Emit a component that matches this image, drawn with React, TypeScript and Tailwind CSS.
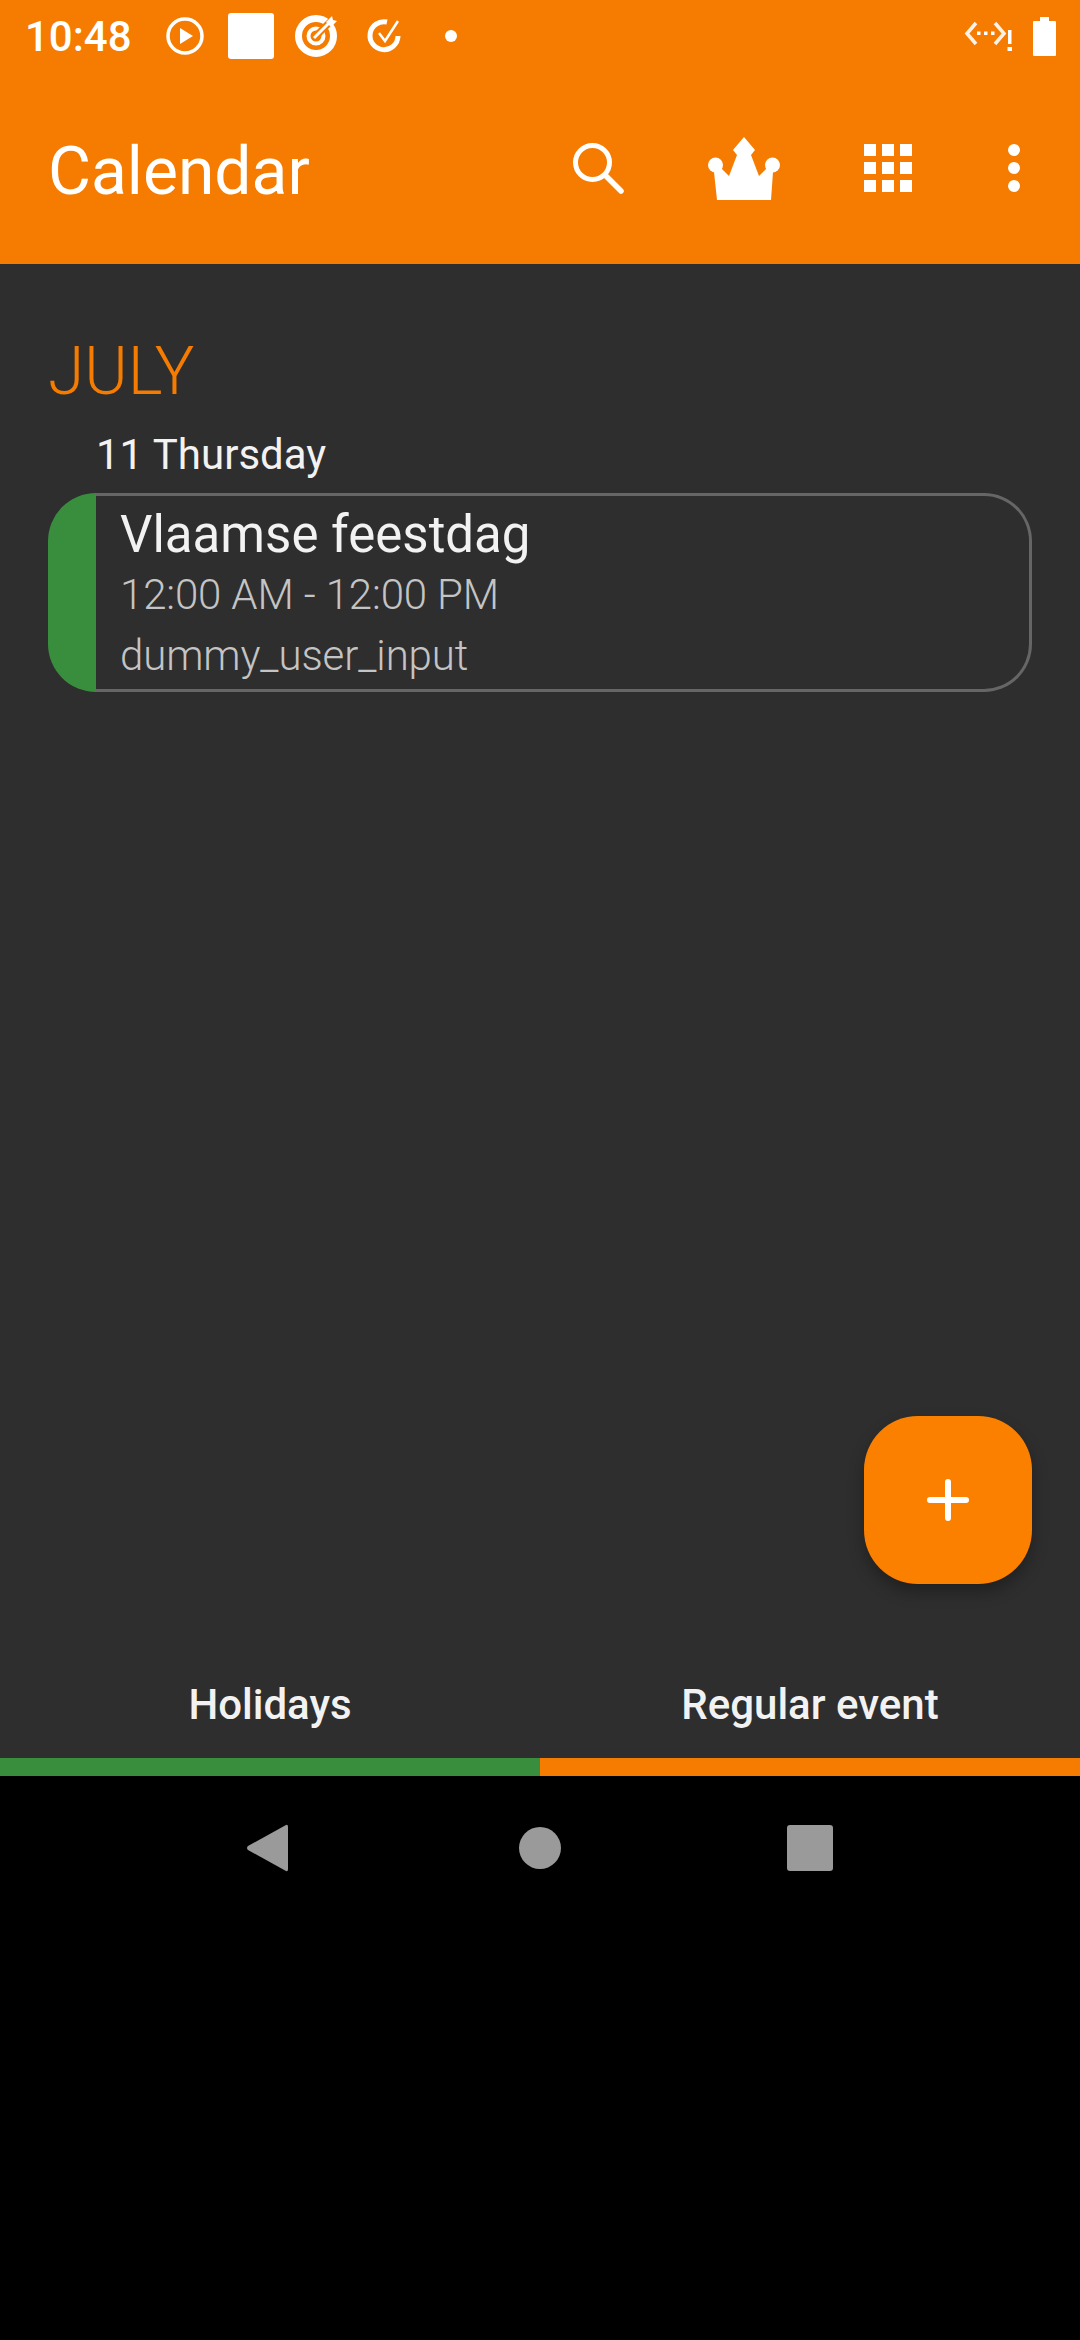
const roboto = 'font-["Roboto",sans-serif]';

function PlayCircle() {
  return (
    <svg width="38" height="38" viewBox="0 0 38 38" className="ml-[37px]">
      <circle cx="19" cy="19" r="17" fill="none" stroke="#fff" strokeWidth="3.5" />
      <path d="M14 11 L27 19 L14 27 Z" fill="#fff" />
    </svg>
  );
}

function TargetIcon() {
  return (
    <svg width="44" height="42" viewBox="0 0 44 42" className="ml-[21px]">
      <circle cx="21" cy="21" r="17.5" fill="none" stroke="#fff" strokeWidth="7" />
      <circle cx="21" cy="21" r="7.5" fill="none" stroke="#fff" strokeWidth="4" />
      <path d="M21 21 L37 5" stroke="#f57c00" strokeWidth="7" fill="none" />
      <path d="M19 23 L35 7" stroke="#fff" strokeWidth="3" fill="none" />
      <path d="M31 7 L37 1 L38 5 L42 6 L36 12 Z" fill="#fff" />
    </svg>
  );
}

function CheckRing() {
  return (
    <svg width="36" height="36" viewBox="0 0 36 36" className="ml-[27px]">
      <path d="M21 4 A14 14 0 1 0 32 18" fill="none" stroke="#fff" strokeWidth="5" />
      <path d="M13 15 L19 23 L32 3" fill="none" stroke="#fff" strokeWidth="2.5" />
    </svg>
  );
}

function DataSaver() {
  return (
    <svg width="48" height="30" viewBox="0 0 48 30">
      <path d="M12 2 L3 12.5 L12 23" fill="none" stroke="#fff" strokeWidth="3.5" opacity="0.9" />
      <path d="M31 2 L40 12.5 L31 23" fill="none" stroke="#fff" strokeWidth="3.5" opacity="0.9" />
      <rect x="13" y="10.5" width="3.5" height="3.5" fill="#fff" />
      <rect x="20" y="10.5" width="3.5" height="3.5" fill="#fff" />
      <rect x="27" y="10.5" width="3.5" height="3.5" fill="#fff" />
      <rect x="44" y="9" width="3.5" height="14" fill="#fff" />
      <rect x="43.5" y="26" width="4.5" height="4" fill="#fff" />
    </svg>
  );
}

function Battery() {
  return (
    <svg width="23" height="39" viewBox="0 0 23 39">
      <path d="M7 0 H16 V4 H22 A1 1 0 0 1 23 5 V38 A1 1 0 0 1 22 39 H1 A1 1 0 0 1 0 38 V5 A1 1 0 0 1 1 4 H7 Z" fill="#fff" />
    </svg>
  );
}

function Crown() {
  return (
    <svg width="72" height="63" viewBox="0 0 72 63">
      <path d="M36 0 L47 13 L43 18 L51 39 L60 30 L65 35 L63 63 H9 L6 35 L12 30 L21 39 L29 18 L25 13 Z" fill="#fff" />
      <circle cx="7.5" cy="28" r="7.5" fill="#fff" />
      <circle cx="64.5" cy="28" r="7.5" fill="#fff" />
    </svg>
  );
}

function SearchIcon() {
  return (
    <svg width="51" height="51" viewBox="0 0 51 51">
      <circle cx="19.5" cy="19.5" r="17" fill="none" stroke="#fff" strokeWidth="5" />
      <path d="M33 33 L48 48" stroke="#fff" strokeWidth="5.5" strokeLinecap="round" />
    </svg>
  );
}

function GridIcon() {
  const cells = [0, 18, 36];
  return (
    <svg width="48" height="48" viewBox="0 0 48 48" fill="#fff">
      {cells.map((y) => cells.map((x) => <rect key={`${x}-${y}`} x={x} y={y} width="12" height="12" />))}
    </svg>
  );
}

function MoreIcon() {
  return (
    <svg width="12" height="48" viewBox="0 0 12 48" fill="#fff">
      <circle cx="6" cy="6" r="6" />
      <circle cx="6" cy="24" r="6" />
      <circle cx="6" cy="42" r="6" />
    </svg>
  );
}

export default function App() {
  return (
    <div className={`w-[1080px] h-[2340px] flex flex-col bg-black ${roboto}`}>
      <header className="bg-[#f57c00] h-[264px] text-white shrink-0 flex flex-col">
        <div className="h-[72px] flex items-center pl-[25px] pr-[24px]">
          <span className="text-[42px] leading-none font-medium w-[104px] pt-[2px]">10:48</span>
          <PlayCircle />
          <div className="w-[46px] h-[46px] bg-white rounded-[3px] ml-[24px]"></div>
          <TargetIcon />
          <CheckRing />
          <div className="w-[12px] h-[12px] rounded-full bg-white ml-[43px]"></div>
          <div className="ml-auto flex items-center gap-[21px]">
            <DataSaver />
            <Battery />
          </div>
        </div>
        <div className="flex-1 flex items-center pl-[48px]">
          <h1 className="text-[66px] leading-none font-normal pt-[8px]">Calendar</h1>
          <div className="ml-auto flex items-center pr-[60px]">
            <SearchIcon />
            <div className="ml-[84px]"><Crown /></div>
            <div className="ml-[84px]"><GridIcon /></div>
            <div className="ml-[96px]"><MoreIcon /></div>
          </div>
        </div>
      </header>

      <main className="relative flex-1 bg-[#2e2e2e] flex flex-col px-[48px] pt-[72px]">
        <h2 className="text-[66px] leading-[72px] font-light text-[#f57c00]">JULY</h2>
        <div className="text-[42px] leading-[50px] text-[#f2f2f2] pl-[48px] mt-[22px]">11 Thursday</div>
        <div className="mt-[13px] h-[199px] flex">
          <div className="w-[48px] bg-[#388e3c] shrink-0 rounded-l-[48px]"></div>
          <div className="flex-1 pl-[24px] flex flex-col border-[3px] border-l-0 border-[#666666] rounded-r-[48px]">
            <div className="text-[51px] leading-[56px] text-[#f2f2f2] mt-[11px]">Vlaamse feestdag</div>
            <div className="text-[42px] leading-[50px] font-light tracking-[-0.15px] text-[#c4c4c4] mt-[7px]">12:00 AM - 12:00 PM</div>
            <div className="text-[42px] leading-[50px] font-light tracking-[-0.1px] text-[#c4c4c4] mt-[11px]">dummy_user_input</div>
          </div>
        </div>
        <button className="absolute right-[48px] top-[1152px] w-[168px] h-[168px] rounded-[54px] bg-[#fb8000] shadow-[0_8px_16px_rgba(0,0,0,0.3)] flex items-center justify-center">
          <svg width="42" height="42" viewBox="0 0 42 42">
            <path d="M3 21 H39 M21 3 V39" stroke="#fff" strokeWidth="6" strokeLinecap="round" />
          </svg>
        </button>

        <div className="mt-auto -mx-[48px] grid grid-cols-2">
          <div className="flex flex-col">
            <div className="h-[116px] pt-[8px] flex items-center justify-center text-[42px] font-medium text-[#f2f2f2]">Holidays</div>
            <div className="h-[18px] bg-[#388e3c]"></div>
          </div>
          <div className="flex flex-col">
            <div className="h-[116px] pt-[8px] flex items-center justify-center text-[42px] font-medium text-[#f2f2f2]">Regular event</div>
            <div className="h-[18px] bg-[#f57c00]"></div>
          </div>
        </div>
      </main>

      <nav className="h-[564px] shrink-0 bg-black">
        <div className="h-[144px] flex items-center pl-[246px]">
          <svg width="42" height="48" viewBox="0 0 42 48">
            <path d="M40 1 Q42 0 42 3 V45 Q42 48 40 47 L2 26 Q0 24 2 22 Z" fill="#9a9a9a" />
          </svg>
          <div className="w-[42px] h-[42px] rounded-full bg-[#9a9a9a] ml-[231px]"></div>
          <div className="w-[46px] h-[46px] rounded-[3px] bg-[#9a9a9a] ml-[226px]"></div>
        </div>
      </nav>
    </div>
  );
}
